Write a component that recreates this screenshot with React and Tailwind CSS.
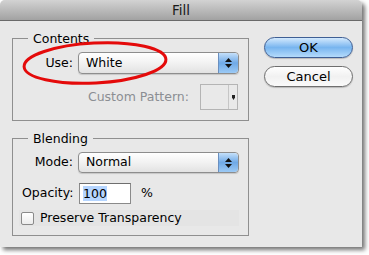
import React from "react";

function Stepper() {
  return (
    <div className="w-[20px] h-full rounded-r-[4px] bg-gradient-to-b from-[#c4e0fa] via-[#6fa9e6] to-[#9ccaf5] border-l border-[#6a8fbf] flex flex-col items-center justify-center gap-[2px]">
      <svg width="7" height="4" viewBox="0 0 7 4"><path d="M3.5 0 L7 4 L0 4 Z" fill="#111" /></svg>
      <svg width="7" height="4" viewBox="0 0 7 4"><path d="M0 0 L7 0 L3.5 4 Z" fill="#111" /></svg>
    </div>
  );
}

function Select({ value, h }) {
  return (
    <div className={`w-[161px] ${h} flex rounded-[4px] border border-[#8d8d8d] bg-gradient-to-b from-[#ffffff] via-[#f2f2f2] to-[#e2e2e2] shadow-[0_1px_1px_rgba(0,0,0,0.15)]`}>
      <div className="flex-1 flex items-center pl-[7px] text-black">{value}</div>
      <Stepper />
    </div>
  );
}

export default function App() {
  return (
    <div className="w-[369px] h-[255px] bg-white" style={{ fontFamily: '"DejaVu Sans", sans-serif' }}>
      <div className="w-[362px] h-[247px] bg-[#e8e8e8] rounded-t-[5px] shadow-[3px_3px_4px_rgba(0,0,0,0.55)] flex flex-col overflow-hidden text-[12.5px]">
        <div className="h-[21px] border-b border-[#6a6a6a] bg-gradient-to-b from-[#d3d3d3] to-[#a2a2a2] flex items-center justify-center text-[13.5px] text-[#1a1a1a]">
          Fill
        </div>
        <div className="flex relative">
          <div className="ml-[12px] flex flex-col">
            <fieldset className="mt-[10px] w-[237px] border border-[#8f8f8f] pb-[10px]">
              <legend className="ml-[15px] px-[5px] leading-[15px] text-black">Contents</legend>
              <div className="mt-[6px] flex items-center">
                <div className="w-[60px] mr-[5px] text-right text-black">Use:</div>
                <Select value="White" h="h-[22px]" />
              </div>
              <div className="mt-[10px] h-[26px] flex items-center justify-end pr-[10px]">
                <div className="mr-[11px] text-[#8b8e93]">Custom Pattern:</div>
                <div className="w-[38px] h-[26px] border border-[#b4b4b4] bg-[#e9e9e9] flex justify-end">
                  <div className="w-[9px] h-full border-l border-[#c6c6c6] flex items-center justify-center">
                    <svg width="3" height="5" viewBox="0 0 3 5"><path d="M0 0 H3 V2.5 L1.5 5 L0 2.5 Z" fill="#222" /></svg>
                  </div>
                </div>
              </div>
            </fieldset>
            <fieldset className="mt-[10px] w-[237px] border border-[#8f8f8f] pb-[9px]">
              <legend className="ml-[15px] px-[5px] leading-[15px] text-black">Blending</legend>
              <div className="mt-[6px] flex items-center">
                <div className="w-[60px] mr-[5px] text-right text-black">Mode:</div>
                <Select value="Normal" h="h-[21px]" />
              </div>
              <div className="mt-[10px] h-[21px] flex items-center">
                <div className="ml-[9px] w-[53px] text-black">Opacity:</div>
                <div className="ml-[4px] w-[52px] h-[21px] border border-[#8a8a8a] border-t-[#6e6e6e] bg-white flex items-center pl-[3px]">
                  <span className="bg-[#b5d5ff] text-black leading-[15px]">100</span>
                </div>
                <div className="ml-[10px] text-black">%</div>
              </div>
              <div className="mt-[6px] ml-[6px] w-[220px] h-[16px] bg-[#e4e4e4] flex items-center pl-[2px]">
                <div className="w-[13px] h-[13px] rounded-[2px] border border-[#8a8a8a] bg-gradient-to-b from-white to-[#ececec]" />
                <div className="ml-[6px] text-black">Preserve Transparency</div>
              </div>
            </fieldset>
          </div>
          <div className="ml-[15px] mt-[16px] flex flex-col gap-[8px]">
            <div className="w-[89px] h-[21px] rounded-full border border-[#3f5f94] bg-gradient-to-b from-[#d3e9fd] via-[#78b5ef] to-[#b4dbfb] flex items-center justify-center text-black text-[13px] shadow-[0_1px_1px_rgba(0,0,0,0.2)]">
              OK
            </div>
            <div className="w-[89px] h-[21px] rounded-full border border-[#6f6f6f] bg-gradient-to-b from-[#ffffff] via-[#f1f1f1] to-[#fafafa] flex items-center justify-center text-black text-[13px] shadow-[0_1px_1px_rgba(0,0,0,0.2)]">
              Cancel
            </div>
          </div>
          <svg className="absolute left-0 top-0 pointer-events-none" width="200" height="80" viewBox="0 0 200 80">
            <ellipse cx="95" cy="42" rx="71" ry="20" transform="rotate(-3 95 42)" fill="none" stroke="#e40a0a" strokeWidth="3" />
          </svg>
        </div>
      </div>
    </div>
  );
}
